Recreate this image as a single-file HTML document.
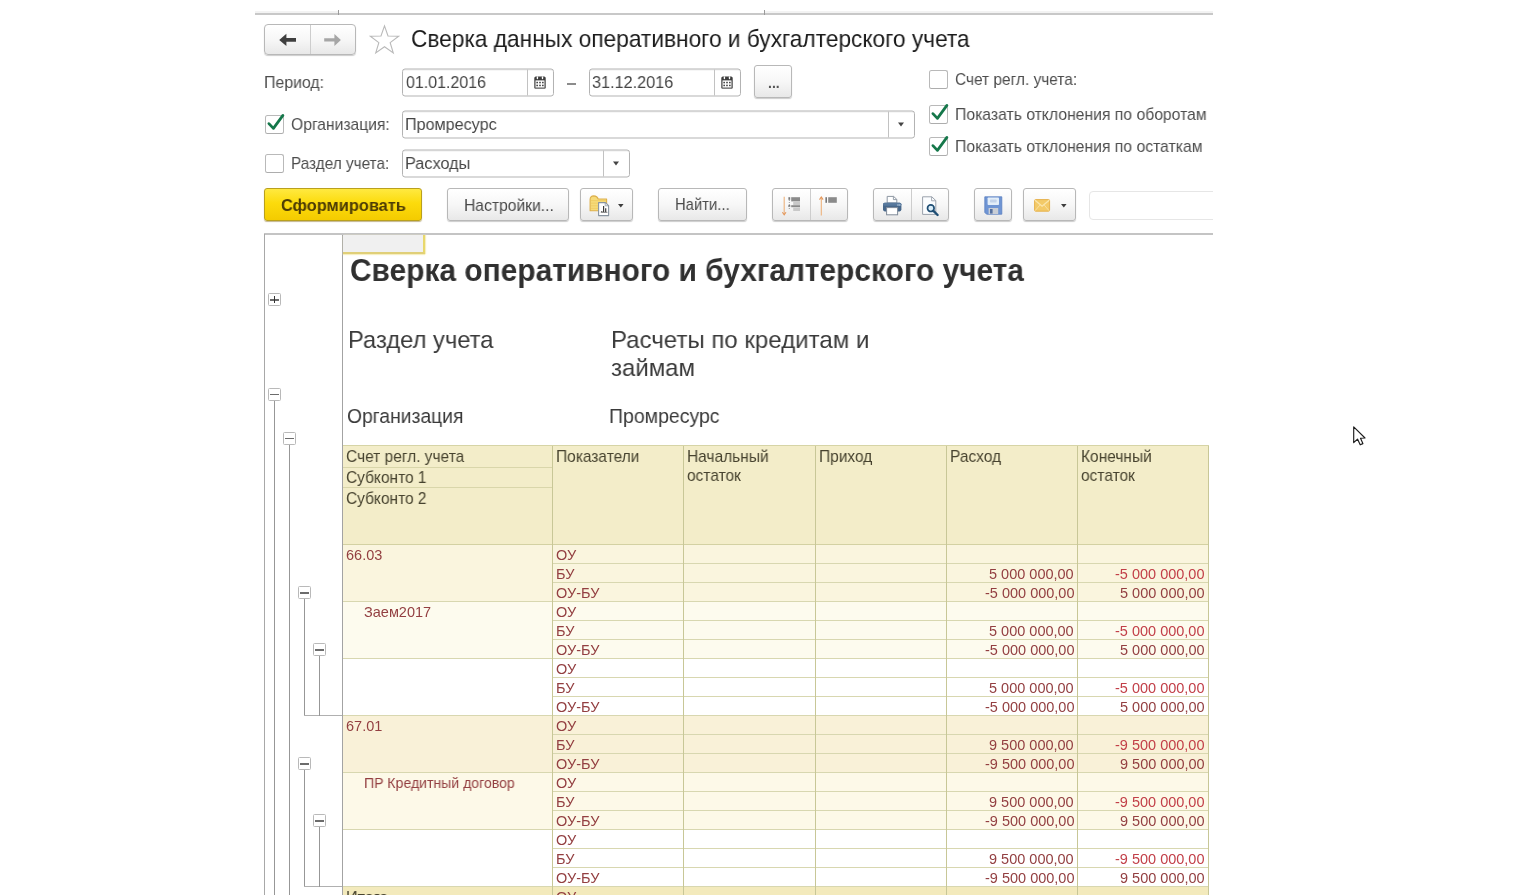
<!DOCTYPE html>
<html lang="ru">
<head>
<meta charset="utf-8">
<title>Сверка данных оперативного и бухгалтерского учета</title>
<style>
*{box-sizing:border-box;margin:0;padding:0}
html,body{width:1536px;height:895px;overflow:hidden;background:#fff}
body{font-family:"Liberation Sans",sans-serif;color:#444;position:relative;font-size:15px}
.abs{position:absolute}
.t{position:absolute;white-space:nowrap;line-height:1;will-change:transform}
.lbl{font-size:15.5px;color:#4d4d4d}
.inp{position:absolute;border:1px solid #b3b3b3;border-radius:3px;background:#fff;font-size:16px;color:#454545;box-shadow:inset 0 1px 1px rgba(0,0,0,.07)}
.inp .v{position:absolute;left:3.6px;top:4.2px;white-space:nowrap;line-height:1;font-size:17.1px;transform:scaleX(.935);transform-origin:0 50%}
.inp .dv{position:absolute;top:0;bottom:0;width:1px;background:#c2c2c2}
.btn{position:absolute;border:1px solid #b8b8b8;border-radius:3px;background:linear-gradient(#ffffff 0%,#f7f7f7 50%,#e8e8e8 100%);box-shadow:0 1px 1px rgba(0,0,0,.2);font-size:15.3px;color:#4d4d4d;text-align:center}
.btn .dv{position:absolute;top:0;bottom:0;width:1px;background:#cdcdcd}
.cb{position:absolute;width:19px;height:19px;border:1px solid #b9b9b9;border-bottom-color:#adadad;border-radius:2.5px;background:#fff}
.arr{position:absolute;width:0;height:0;border-left:3.5px solid transparent;border-right:3.5px solid transparent;border-top:4px solid #444}
.bx{position:absolute;width:13px;height:13px;border:1px solid #b9b9b9;background:#fff;border-radius:1.5px}
.bx:before{content:"";position:absolute;left:1px;right:1px;top:5px;height:1.5px;background:#6c6c6c}
.bx.plus:after{content:"";position:absolute;top:2px;bottom:2px;left:5px;width:1px;background:#333}
.vl{position:absolute;width:1px;background:#979797}
.hl{position:absolute;height:1px;background:#b0b0b0}
.bg{position:absolute}
.gv{position:absolute;width:1px;background:#c8c797}
.gh{position:absolute;height:1px;background:#d8d7b0}
.d{position:absolute;font-size:14px;color:#8e3a40;white-space:nowrap;line-height:1}
.r{color:#b0383f}
.h{position:absolute;font-size:15px;color:#454545;white-space:nowrap;line-height:1}
</style>
</head>
<body>
<div class="abs" style="left:255px;top:13px;width:958px;height:2px;background:#c8c8c8"></div>
<div class="abs" style="left:255px;top:11px;width:83px;height:2px;background:#f3f3f3"></div>
<div class="abs" style="left:765px;top:11px;width:448px;height:2px;background:#f3f3f3"></div>
<div class="abs" style="left:338px;top:10px;width:1px;height:5px;background:#9a9a9a"></div>
<div class="abs" style="left:764px;top:10px;width:1px;height:5px;background:#9a9a9a"></div>
<div class="btn" style="left:264px;top:24px;width:92px;height:31px;border-radius:4px">
  <div class="dv" style="left:45px"></div>
  <svg class="abs" style="left:0;top:0" width="90" height="29" viewBox="0 0 90 29"><path d="M14.2 14.9 L21.4 8.7 L21.4 13.1 L31 13.1 L31 16.7 L21.4 16.7 L21.4 21.1 Z" fill="#3f3f3f"/><path d="M75.9 14.9 L69.4 8.9 L69.4 13.2 L59.2 13.2 L59.2 16.6 L69.4 16.6 L69.4 20.9 Z" fill="#a6a6a6"/></svg>
</div>
<svg class="abs" style="left:368px;top:24.4px" width="33" height="33" viewBox="0 0 33 33"><path d="M16.50 1.90 L20.00 11.98 L30.67 12.20 L22.17 18.64 L25.26 28.85 L16.50 22.76 L7.74 28.85 L10.83 18.64 L2.33 12.20 L13.00 11.98 Z" fill="#fff" stroke="#b9b9b9" stroke-width="1.1" stroke-linejoin="miter"/></svg>
<div class="t" id="title" style="top:25.20px;font-size:24.2px;line-height:27px;left:411px;transform-origin:0 50%;transform:scaleX(0.938);color:#1a1a1a;">Сверка данных оперативного и бухгалтерского учета</div>
<div class="t" id="l1" style="top:73.20px;font-size:16.6px;line-height:19px;left:264px;transform-origin:0 50%;transform:scaleX(0.955);color:#4d4d4d;">Период:</div>
<div class="inp" style="left:402px;top:69px;width:152px;height:28px;transform:translateY(-0.5px)"><div class="dv" style="left:124px"></div><svg class="abs" style="left:131px;top:5.6px" width="12" height="14" viewBox="0 0 12 14"><path d="M0.3 2.6 Q0.3 1 1.9 1 H10.1 Q11.7 1 11.7 2.6 V12 Q11.7 13.3 10.4 13.3 H1.6 Q0.3 13.3 0.3 12 Z" fill="#3d3d3d"/><rect x="1.5" y="4.9" width="9" height="7.2" fill="#fff"/><ellipse cx="3.4" cy="2.3" rx=".75" ry="1.5" fill="#fff"/><ellipse cx="8.5" cy="2.3" rx=".75" ry="1.5" fill="#fff"/><path d="M1.2 12.3 H10.8 V13 H1.2 Z" fill="#9a9a9a"/><g fill="#333"><rect x="2.4" y="6.3" width="1.5" height="1.5"/><rect x="5.25" y="6.3" width="1.5" height="1.5"/><rect x="8.1" y="6.3" width="1.5" height="1.5"/><rect x="2.4" y="9.2" width="1.5" height="1.5"/><rect x="5.25" y="9.2" width="1.5" height="1.5"/><rect x="8.1" y="9.2" width="1.5" height="1.5"/></g></svg></div>
<div class="abs" style="left:567px;top:83px;width:9px;height:2px;background:#8c8c8c"></div>
<div class="inp" style="left:589px;top:69px;width:152px;height:28px;transform:translateY(-0.5px)"><div class="dv" style="left:124px"></div><svg class="abs" style="left:131px;top:5.6px" width="12" height="14" viewBox="0 0 12 14"><path d="M0.3 2.6 Q0.3 1 1.9 1 H10.1 Q11.7 1 11.7 2.6 V12 Q11.7 13.3 10.4 13.3 H1.6 Q0.3 13.3 0.3 12 Z" fill="#3d3d3d"/><rect x="1.5" y="4.9" width="9" height="7.2" fill="#fff"/><ellipse cx="3.4" cy="2.3" rx=".75" ry="1.5" fill="#fff"/><ellipse cx="8.5" cy="2.3" rx=".75" ry="1.5" fill="#fff"/><path d="M1.2 12.3 H10.8 V13 H1.2 Z" fill="#9a9a9a"/><g fill="#333"><rect x="2.4" y="6.3" width="1.5" height="1.5"/><rect x="5.25" y="6.3" width="1.5" height="1.5"/><rect x="8.1" y="6.3" width="1.5" height="1.5"/><rect x="2.4" y="9.2" width="1.5" height="1.5"/><rect x="5.25" y="9.2" width="1.5" height="1.5"/><rect x="8.1" y="9.2" width="1.5" height="1.5"/></g></svg></div>
<div class="btn" style="left:754px;top:65px;width:38px;height:33px"><span class="t" style="left:13px;top:9.5px;font-size:14px;font-weight:bold;color:#555">...</span></div>
<div class="cb" style="left:265px;top:115px"><svg class="abs" style="left:-1px;top:-4.2px;overflow:visible" width="22" height="24" viewBox="0 0 22 24"><path d="M3.9 11.6 L8.4 16.4 L17.9 3.4" fill="none" stroke="#15774a" stroke-width="2.75" stroke-linecap="round" stroke-linejoin="round"/></svg></div>
<div class="t" id="l2" style="top:115.30px;font-size:16.6px;line-height:19px;left:291.3px;transform-origin:0 50%;transform:scaleX(0.944);color:#4d4d4d;">Организация:</div>
<div class="inp" style="left:402px;top:111px;width:513px;height:28px;transform:translateY(-0.5px)"><div class="dv" style="left:485px"></div><div class="arr" style="left:495px;top:11px"></div></div>
<div class="cb" style="left:265px;top:154px"></div>
<div class="t" id="l3" style="top:154.00px;font-size:16.6px;line-height:19px;left:291.3px;transform-origin:0 50%;transform:scaleX(0.924);color:#4d4d4d;">Раздел учета:</div>
<div class="inp" style="left:402px;top:150px;width:228px;height:28px;transform:translateY(-0.5px)"><div class="dv" style="left:200px"></div><div class="arr" style="left:210px;top:11px"></div></div>
<div class="cb" style="left:929px;top:70px"></div>
<div class="t" id="l4" style="top:70.40px;font-size:16.6px;line-height:19px;left:955px;transform-origin:0 50%;transform:scaleX(0.93);color:#4d4d4d;">Счет регл. учета:</div>
<div class="cb" style="left:929px;top:105px"><svg class="abs" style="left:-1px;top:-4.2px;overflow:visible" width="22" height="24" viewBox="0 0 22 24"><path d="M3.9 11.6 L8.4 16.4 L17.9 3.4" fill="none" stroke="#15774a" stroke-width="2.75" stroke-linecap="round" stroke-linejoin="round"/></svg></div>
<div class="t" id="l5" style="top:105.20px;font-size:16.6px;line-height:19px;left:955px;transform-origin:0 50%;transform:scaleX(0.948);color:#4d4d4d;">Показать отклонения по оборотам</div>
<div class="cb" style="left:929px;top:137px"><svg class="abs" style="left:-1px;top:-4.2px;overflow:visible" width="22" height="24" viewBox="0 0 22 24"><path d="M3.9 11.6 L8.4 16.4 L17.9 3.4" fill="none" stroke="#15774a" stroke-width="2.75" stroke-linecap="round" stroke-linejoin="round"/></svg></div>
<div class="t" id="l6" style="top:137.20px;font-size:16.6px;line-height:19px;left:955px;transform-origin:0 50%;transform:scaleX(0.948);color:#4d4d4d;">Показать отклонения по остаткам</div>
<div class="t" id="d1" style="top:73.30px;font-size:17.1px;line-height:19px;left:405.6px;transform-origin:0 50%;transform:scaleX(0.935);color:#454545;">01.01.2016</div>
<div class="t" id="d2" style="top:73.30px;font-size:17.1px;line-height:19px;left:592.4px;transform-origin:0 50%;transform:scaleX(0.95);color:#454545;">31.12.2016</div>
<div class="t" id="v2" style="top:115.40px;font-size:17.1px;line-height:19px;left:405.2px;transform-origin:0 50%;transform:scaleX(0.945);color:#454545;">Промресурс</div>
<div class="t" id="v3" style="top:154.10px;font-size:17.1px;line-height:19px;left:405.2px;transform-origin:0 50%;transform:scaleX(0.952);color:#454545;">Расходы</div>
<div class="btn" style="left:264px;top:188px;width:158px;height:33px;border-color:#b9a01e;background:linear-gradient(#ffe940 0%,#fcdb0c 45%,#f4cb00 100%);box-shadow:0 1px 1px rgba(120,90,0,.45)"></div>
<div class="btn" style="left:447px;top:188px;width:122px;height:33px;"></div>
<div class="btn" style="left:580px;top:188px;width:53px;height:33px;"></div>
<div class="btn" style="left:658px;top:188px;width:89px;height:33px;"></div>
<div class="btn" style="left:772px;top:188px;width:76px;height:33px;"><div class="dv" style="left:37px"></div></div>
<div class="btn" style="left:873px;top:188px;width:76px;height:33px;"><div class="dv" style="left:37px"></div></div>
<div class="btn" style="left:974px;top:188px;width:38px;height:33px;"></div>
<div class="btn" style="left:1023px;top:188px;width:53px;height:33px;"></div>
<div class="t" id="go" style="top:194.60px;font-size:17.4px;line-height:20px;left:280.5px;transform-origin:0 50%;transform:scaleX(0.943);color:#4c3b06;font-weight:bold;">Сформировать</div>
<div class="t" id="b1" style="top:195.60px;font-size:16.4px;line-height:18px;left:463.6px;transform-origin:0 50%;transform:scaleX(0.955);color:#4a4a4a;">Настройки...</div>
<div class="t" id="b2" style="top:195.10px;font-size:16.4px;line-height:18px;left:674.8px;transform-origin:0 50%;transform:scaleX(0.905);color:#4a4a4a;">Найти...</div>
<svg class="abs" style="left:588.5px;top:194.5px;overflow:visible" width="22" height="22" viewBox="0 0 22 22"><path d="M1.1 15.8 V4.6 Q1.1 1.1 4.8 0.9 Q8.2 1 9.2 4 L17.6 4 L17.6 15.8 Z" fill="#f6db7a" stroke="#ddb04c" stroke-width="1.1" stroke-linejoin="round"/><path d="M1.8 5.6 H17 M1.8 8.2 H17 M1.8 10.8 H17 M1.8 13.4 H17" stroke="#eec65a" stroke-width=".9" opacity=".75"/><path d="M9.6 7.6 H16.4 L19.6 10.6 V20.6 H9.6 Z" fill="#fff" stroke="#8894a0" stroke-width="1.1" stroke-linejoin="round"/><path d="M16.2 7.8 V10.8 H19.4" fill="none" stroke="#8894a0" stroke-width=".8"/><path d="M14.6 17 V11 M16.7 17 V13.2" stroke="#3c3c3c" stroke-width="1.2" fill="none"/><path d="M11.8 17.3 H18.4" stroke="#555" stroke-width=".8"/><rect x="12.3" y="16" width="1" height="1" fill="#444"/></svg>
<svg class="abs" style="left:618.2px;top:204.20000000000002px;overflow:visible" width="5.6" height="3.4" viewBox="0 0 5.6 3.4"><path d="M0 0 L5.6 0 L2.8 3.4 Z" fill="#3d3d3d"/></svg>
<svg class="abs" style="left:778px;top:195px;overflow:visible" width="26" height="22" viewBox="0 0 26 22"><path d="M6.2 1.8 V19" stroke="#ecb27c" stroke-width="1.1"/><path d="M4.4 17.2 L6.2 19.8 L8 17.2" fill="none" stroke="#e3965a" stroke-width="1.1"/><rect x="10.4" y="2.2" width="1.8" height="2.6" fill="#777"/><rect x="10.4" y="10" width="1.8" height="2" fill="#777"/><path d="M11.3 5 V15" stroke="#9a9a9a" stroke-width="1" stroke-dasharray="1 1"/><rect x="13.2" y="2.2" width="8.8" height="4.2" fill="#8a8a8a"/><rect x="15.2" y="6.8" width="6.8" height="3.2" fill="#c9c9c9"/><rect x="13.2" y="10.2" width="8.8" height="2" fill="#8a8a8a"/><rect x="15.2" y="12.6" width="6.8" height="3.4" fill="#c9c9c9"/></svg>
<svg class="abs" style="left:815px;top:195px;overflow:visible" width="26" height="22" viewBox="0 0 26 22"><path d="M6.3 2.4 V20.6" stroke="#ecb27c" stroke-width="1.1"/><path d="M4.5 4.6 L6.3 2 L8.1 4.6" fill="none" stroke="#e3965a" stroke-width="1.1"/><rect x="10.4" y="2.2" width="1.6" height="5.6" fill="#777"/><rect x="13.2" y="2.2" width="8.6" height="5.6" fill="#8a8a8a"/></svg>
<svg class="abs" style="left:882px;top:195px;overflow:visible" width="21" height="21" viewBox="0 0 21 21"><path d="M5.2 8 V1.4 H11.6 L14.8 4.4 V8 Z" fill="#fff" stroke="#8c96a2" stroke-width="1"/><path d="M11.4 1.4 V4.6 H14.8" fill="none" stroke="#8c96a2" stroke-width=".9"/><rect x="1" y="7.8" width="18.4" height="8.6" rx="1.8" fill="#47678a"/><rect x="1" y="7.8" width="18.4" height="3" rx="1.5" fill="#58799d"/><rect x="15.4" y="9.4" width="1.2" height="1.2" fill="#cfe0f0"/><rect x="17.2" y="9.4" width="1.2" height="1.2" fill="#cfe0f0"/><rect x="4.6" y="12.6" width="11" height="7.2" fill="#fff" stroke="#7f8b99" stroke-width="1"/></svg>
<svg class="abs" style="left:921px;top:195px;overflow:visible" width="20" height="22" viewBox="0 0 20 22"><path d="M1.6 1.8 H10.8 L14.8 5.6 V19.4 H1.6 Z" fill="#fbfdff" stroke="#9aa2ac" stroke-width="1"/><path d="M10.6 1.8 V5.8 H14.8" fill="none" stroke="#9aa2ac" stroke-width=".9"/><circle cx="9.8" cy="13.2" r="3.3" fill="#d9edf9" stroke="#1f4e74" stroke-width="1.7"/><path d="M12.4 15.8 L16.6 20" stroke="#1f4e74" stroke-width="2.4" stroke-linecap="round"/></svg>
<svg class="abs" style="left:983.5px;top:196px;overflow:visible" width="19" height="19" viewBox="0 0 19 19"><path d="M0.8 0.8 H17.8 V18.2 H2.6 L0.8 16.4 Z" fill="#6f95d4" stroke="#5a7fc0" stroke-width=".8"/><rect x="3.6" y="1.4" width="11.4" height="7.6" rx=".8" fill="#e3eef9"/><rect x="6" y="3.4" width="6.6" height="3.2" rx=".8" fill="#c3d3ea"/><rect x="4.6" y="12" width="9.6" height="6" fill="#c9ced6"/><rect x="6" y="13" width="2.6" height="4.6" fill="#55709f"/></svg>
<svg class="abs" style="left:1033.6px;top:199.2px;overflow:visible" width="16.2" height="12.8" viewBox="0 0 16.2 12.8"><rect x=".6" y=".6" width="15" height="11.6" rx="1" fill="#f3ca68" stroke="#e6b24e" stroke-width="1"/><path d="M1 1.2 L8.1 7.2 L15.2 1.2" fill="none" stroke="#fae6ae" stroke-width="1.3"/><path d="M1.2 11.6 L6 6 M15 11.6 L10.2 6" fill="none" stroke="#f9dfa0" stroke-width="1"/></svg>
<svg class="abs" style="left:1061.2px;top:204.0px;overflow:visible" width="5.6" height="3.4" viewBox="0 0 5.6 3.4"><path d="M0 0 L5.6 0 L2.8 3.4 Z" fill="#3d3d3d"/></svg>
<div class="inp" style="left:1089px;top:191px;width:130px;height:29px;border-color:#e6e6e6;box-shadow:none;border-radius:4px"></div>
<div class="abs" style="left:1213px;top:185px;width:20px;height:40px;background:#fff"></div>
<div class="abs" style="left:264px;top:233px;width:949px;height:2px;background:#c4c4c4"></div>
<div class="abs" style="left:264px;top:234px;width:1px;height:661px;background:#a8a8a8"></div>
<div class="abs" style="left:342px;top:235px;width:1px;height:660px;background:#a3a3a3"></div>
<div class="abs" style="left:343px;top:235px;width:82px;height:19px;background:#f0f0f0;border-right:2px solid #e8d86c;border-bottom:2px solid #e0cf78;box-shadow:0 1px 1px #f7efc0,1px 0 1px #f7efc0"></div>
<div class="t" id="rt" style="top:253.40px;font-size:30.6px;line-height:34px;left:350px;transform-origin:0 50%;transform:scaleX(0.977);color:#303030;font-weight:bold;">Сверка оперативного и бухгалтерского учета</div>
<div class="t" id="s1" style="top:326.40px;font-size:24.6px;line-height:27px;left:348.4px;transform-origin:0 50%;transform:scaleX(0.965);color:#3a3a3a;">Раздел учета</div>
<div class="t" id="s2" style="top:326.40px;font-size:24.6px;line-height:27px;left:611.2px;transform-origin:0 50%;transform:scaleX(0.977);color:#3a3a3a;">Расчеты по кредитам и</div>
<div class="t" style="top:354.00px;font-size:24.6px;line-height:27px;left:610.6px;transform-origin:0 50%;transform:scaleX(0.975);color:#3a3a3a;">займам</div>
<div class="t" id="o1" style="top:403.80px;font-size:20.5px;line-height:23px;left:347.4px;transform-origin:0 50%;transform:scaleX(0.942);color:#3a3a3a;">Организация</div>
<div class="t" id="o2" style="top:403.80px;font-size:20.5px;line-height:23px;left:609.4px;transform-origin:0 50%;transform:scaleX(0.95);color:#3a3a3a;">Промресурс</div>
<div class="bx plus" style="left:268px;top:293px"></div>
<div class="vl" style="left:274px;top:400px;height:495px"></div>
<div class="bx" style="left:268px;top:387.5px"></div>
<div class="vl" style="left:289px;top:444px;height:451px"></div>
<div class="bx" style="left:283px;top:431.5px"></div>
<div class="vl" style="left:304px;top:599px;height:117px"></div>
<div class="hl" style="left:304px;top:715px;width:38px"></div>
<div class="bx" style="left:298px;top:586px"></div>
<div class="vl" style="left:319px;top:656px;height:60px"></div>
<div class="bx" style="left:313px;top:643px"></div>
<div class="vl" style="left:304px;top:770px;height:117px"></div>
<div class="hl" style="left:304px;top:886px;width:38px"></div>
<div class="bx" style="left:298px;top:757px"></div>
<div class="vl" style="left:319px;top:827px;height:60px"></div>
<div class="bx" style="left:313px;top:814px"></div>
<div class="bg" style="left:343px;top:446px;width:866px;height:99px;background:#f3edc9"></div>
<div class="bg" style="left:343px;top:545px;width:866px;height:57px;background:#faf5de"></div>
<div class="t" style="top:546.50px;font-size:14.5px;line-height:16px;left:345.6px;transform-origin:0 50%;color:#933f41;">66.03</div>
<div class="t" style="top:546.50px;font-size:14.5px;line-height:16px;left:555.8px;transform-origin:0 50%;color:#933f41;">ОУ</div>
<div class="gh" style="left:552px;top:563px;width:657px"></div>
<div class="t" style="top:565.50px;font-size:14.5px;line-height:16px;left:555.8px;transform-origin:0 50%;color:#933f41;">БУ</div>
<div class="t" style="top:565.50px;font-size:14.5px;line-height:16px;right:462px;transform-origin:100% 50%;color:#933f41;">5 000 000,00</div>
<div class="t" style="top:565.50px;font-size:14.5px;line-height:16px;right:331.4000000000001px;transform-origin:100% 50%;color:#c23f48;">-5 000 000,00</div>
<div class="gh" style="left:552px;top:582px;width:657px"></div>
<div class="t" style="top:584.50px;font-size:14.5px;line-height:16px;left:555.8px;transform-origin:0 50%;color:#933f41;">ОУ-БУ</div>
<div class="t" style="top:584.50px;font-size:14.5px;line-height:16px;right:462px;transform-origin:100% 50%;color:#933f41;">-5 000 000,00</div>
<div class="t" style="top:584.50px;font-size:14.5px;line-height:16px;right:331.4000000000001px;transform-origin:100% 50%;color:#933f41;">5 000 000,00</div>
<div class="gh" style="left:343px;top:601px;width:866px"></div>
<div class="bg" style="left:343px;top:602px;width:866px;height:57px;background:#fdfbee"></div>
<div class="t" style="top:603.50px;font-size:14.5px;line-height:16px;left:363.6px;transform-origin:0 50%;color:#933f41;">Заем2017</div>
<div class="t" style="top:603.50px;font-size:14.5px;line-height:16px;left:555.8px;transform-origin:0 50%;color:#933f41;">ОУ</div>
<div class="gh" style="left:552px;top:620px;width:657px"></div>
<div class="t" style="top:622.50px;font-size:14.5px;line-height:16px;left:555.8px;transform-origin:0 50%;color:#933f41;">БУ</div>
<div class="t" style="top:622.50px;font-size:14.5px;line-height:16px;right:462px;transform-origin:100% 50%;color:#933f41;">5 000 000,00</div>
<div class="t" style="top:622.50px;font-size:14.5px;line-height:16px;right:331.4000000000001px;transform-origin:100% 50%;color:#c23f48;">-5 000 000,00</div>
<div class="gh" style="left:552px;top:639px;width:657px"></div>
<div class="t" style="top:641.50px;font-size:14.5px;line-height:16px;left:555.8px;transform-origin:0 50%;color:#933f41;">ОУ-БУ</div>
<div class="t" style="top:641.50px;font-size:14.5px;line-height:16px;right:462px;transform-origin:100% 50%;color:#933f41;">-5 000 000,00</div>
<div class="t" style="top:641.50px;font-size:14.5px;line-height:16px;right:331.4000000000001px;transform-origin:100% 50%;color:#933f41;">5 000 000,00</div>
<div class="gh" style="left:343px;top:658px;width:866px"></div>
<div class="bg" style="left:343px;top:659px;width:866px;height:57px;background:#ffffff"></div>
<div class="t" style="top:660.50px;font-size:14.5px;line-height:16px;left:555.8px;transform-origin:0 50%;color:#933f41;">ОУ</div>
<div class="gh" style="left:552px;top:677px;width:657px"></div>
<div class="t" style="top:679.50px;font-size:14.5px;line-height:16px;left:555.8px;transform-origin:0 50%;color:#933f41;">БУ</div>
<div class="t" style="top:679.50px;font-size:14.5px;line-height:16px;right:462px;transform-origin:100% 50%;color:#933f41;">5 000 000,00</div>
<div class="t" style="top:679.50px;font-size:14.5px;line-height:16px;right:331.4000000000001px;transform-origin:100% 50%;color:#c23f48;">-5 000 000,00</div>
<div class="gh" style="left:552px;top:696px;width:657px"></div>
<div class="t" style="top:698.50px;font-size:14.5px;line-height:16px;left:555.8px;transform-origin:0 50%;color:#933f41;">ОУ-БУ</div>
<div class="t" style="top:698.50px;font-size:14.5px;line-height:16px;right:462px;transform-origin:100% 50%;color:#933f41;">-5 000 000,00</div>
<div class="t" style="top:698.50px;font-size:14.5px;line-height:16px;right:331.4000000000001px;transform-origin:100% 50%;color:#933f41;">5 000 000,00</div>
<div class="gh" style="left:343px;top:715px;width:866px"></div>
<div class="bg" style="left:343px;top:716px;width:866px;height:57px;background:#f9f1d8"></div>
<div class="t" style="top:717.50px;font-size:14.5px;line-height:16px;left:345.6px;transform-origin:0 50%;color:#933f41;">67.01</div>
<div class="t" style="top:717.50px;font-size:14.5px;line-height:16px;left:555.8px;transform-origin:0 50%;color:#933f41;">ОУ</div>
<div class="gh" style="left:552px;top:734px;width:657px"></div>
<div class="t" style="top:736.50px;font-size:14.5px;line-height:16px;left:555.8px;transform-origin:0 50%;color:#933f41;">БУ</div>
<div class="t" style="top:736.50px;font-size:14.5px;line-height:16px;right:462px;transform-origin:100% 50%;color:#933f41;">9 500 000,00</div>
<div class="t" style="top:736.50px;font-size:14.5px;line-height:16px;right:331.4000000000001px;transform-origin:100% 50%;color:#c23f48;">-9 500 000,00</div>
<div class="gh" style="left:552px;top:753px;width:657px"></div>
<div class="t" style="top:755.50px;font-size:14.5px;line-height:16px;left:555.8px;transform-origin:0 50%;color:#933f41;">ОУ-БУ</div>
<div class="t" style="top:755.50px;font-size:14.5px;line-height:16px;right:462px;transform-origin:100% 50%;color:#933f41;">-9 500 000,00</div>
<div class="t" style="top:755.50px;font-size:14.5px;line-height:16px;right:331.4000000000001px;transform-origin:100% 50%;color:#933f41;">9 500 000,00</div>
<div class="gh" style="left:343px;top:772px;width:866px"></div>
<div class="bg" style="left:343px;top:773px;width:866px;height:57px;background:#fdf9e8"></div>
<div class="t" style="top:774.50px;font-size:14.5px;line-height:16px;left:363.6px;transform-origin:0 50%;transform:scaleX(0.97);color:#933f41;">ПР Кредитный договор</div>
<div class="t" style="top:774.50px;font-size:14.5px;line-height:16px;left:555.8px;transform-origin:0 50%;color:#933f41;">ОУ</div>
<div class="gh" style="left:552px;top:791px;width:657px"></div>
<div class="t" style="top:793.50px;font-size:14.5px;line-height:16px;left:555.8px;transform-origin:0 50%;color:#933f41;">БУ</div>
<div class="t" style="top:793.50px;font-size:14.5px;line-height:16px;right:462px;transform-origin:100% 50%;color:#933f41;">9 500 000,00</div>
<div class="t" style="top:793.50px;font-size:14.5px;line-height:16px;right:331.4000000000001px;transform-origin:100% 50%;color:#c23f48;">-9 500 000,00</div>
<div class="gh" style="left:552px;top:810px;width:657px"></div>
<div class="t" style="top:812.50px;font-size:14.5px;line-height:16px;left:555.8px;transform-origin:0 50%;color:#933f41;">ОУ-БУ</div>
<div class="t" style="top:812.50px;font-size:14.5px;line-height:16px;right:462px;transform-origin:100% 50%;color:#933f41;">-9 500 000,00</div>
<div class="t" style="top:812.50px;font-size:14.5px;line-height:16px;right:331.4000000000001px;transform-origin:100% 50%;color:#933f41;">9 500 000,00</div>
<div class="gh" style="left:343px;top:829px;width:866px"></div>
<div class="bg" style="left:343px;top:830px;width:866px;height:57px;background:#ffffff"></div>
<div class="t" style="top:831.50px;font-size:14.5px;line-height:16px;left:555.8px;transform-origin:0 50%;color:#933f41;">ОУ</div>
<div class="gh" style="left:552px;top:848px;width:657px"></div>
<div class="t" style="top:850.50px;font-size:14.5px;line-height:16px;left:555.8px;transform-origin:0 50%;color:#933f41;">БУ</div>
<div class="t" style="top:850.50px;font-size:14.5px;line-height:16px;right:462px;transform-origin:100% 50%;color:#933f41;">9 500 000,00</div>
<div class="t" style="top:850.50px;font-size:14.5px;line-height:16px;right:331.4000000000001px;transform-origin:100% 50%;color:#c23f48;">-9 500 000,00</div>
<div class="gh" style="left:552px;top:867px;width:657px"></div>
<div class="t" style="top:869.50px;font-size:14.5px;line-height:16px;left:555.8px;transform-origin:0 50%;color:#933f41;">ОУ-БУ</div>
<div class="t" style="top:869.50px;font-size:14.5px;line-height:16px;right:462px;transform-origin:100% 50%;color:#933f41;">-9 500 000,00</div>
<div class="t" style="top:869.50px;font-size:14.5px;line-height:16px;right:331.4000000000001px;transform-origin:100% 50%;color:#933f41;">9 500 000,00</div>
<div class="gh" style="left:343px;top:886px;width:866px"></div>
<div class="bg" style="left:343px;top:887px;width:866px;height:8px;background:#f3eabc"></div>
<div class="t" style="top:888.40px;font-size:16.4px;line-height:18px;left:345.6px;transform-origin:0 50%;transform:scaleX(0.9828);color:#47432f;">Итого</div>
<div class="t" style="top:888.50px;font-size:14.5px;line-height:16px;left:555.8px;transform-origin:0 50%;color:#933f41;">ОУ</div>
<div class="gh" style="left:343px;top:445px;width:866px;background:#d6d4a6"></div>
<div class="gh" style="left:343px;top:467px;width:209px;background:#d9d6aa"></div>
<div class="gh" style="left:343px;top:487px;width:209px;background:#d9d6aa"></div>
<div class="gh" style="left:343px;top:544px;width:866px;background:#d3d1a2"></div>
<div class="gv" style="left:552px;top:446px;height:449px"></div>
<div class="gv" style="left:683px;top:446px;height:449px"></div>
<div class="gv" style="left:815px;top:446px;height:449px"></div>
<div class="gv" style="left:946px;top:446px;height:449px"></div>
<div class="gv" style="left:1077px;top:446px;height:449px"></div>
<div class="gv" style="left:1208px;top:446px;height:449px"></div>
<div class="t" style="top:447.00px;font-size:16.4px;line-height:18px;left:345.8px;transform-origin:0 50%;transform:scaleX(0.945);color:#47432f;">Счет регл. учета</div>
<div class="t" style="top:468.00px;font-size:16.4px;line-height:18px;left:345.8px;transform-origin:0 50%;transform:scaleX(0.945);color:#47432f;">Субконто 1</div>
<div class="t" style="top:489.00px;font-size:16.4px;line-height:18px;left:345.8px;transform-origin:0 50%;transform:scaleX(0.945);color:#47432f;">Субконто 2</div>
<div class="t" style="top:447.00px;font-size:16.4px;line-height:18px;left:555.8px;transform-origin:0 50%;transform:scaleX(0.945);color:#47432f;">Показатели</div>
<div class="t" style="top:447.00px;font-size:16.4px;line-height:18px;left:686.8px;transform-origin:0 50%;transform:scaleX(0.945);color:#47432f;">Начальный</div>
<div class="t" style="top:466.00px;font-size:16.4px;line-height:18px;left:686.8px;transform-origin:0 50%;transform:scaleX(0.945);color:#47432f;">остаток</div>
<div class="t" style="top:447.00px;font-size:16.4px;line-height:18px;left:818.8px;transform-origin:0 50%;transform:scaleX(0.945);color:#47432f;">Приход</div>
<div class="t" style="top:447.00px;font-size:16.4px;line-height:18px;left:949.8px;transform-origin:0 50%;transform:scaleX(0.945);color:#47432f;">Расход</div>
<div class="t" style="top:447.00px;font-size:16.4px;line-height:18px;left:1080.8px;transform-origin:0 50%;transform:scaleX(0.945);color:#47432f;">Конечный</div>
<div class="t" style="top:466.00px;font-size:16.4px;line-height:18px;left:1080.8px;transform-origin:0 50%;transform:scaleX(0.945);color:#47432f;">остаток</div>
<svg class="abs" style="left:1352px;top:426px" width="15" height="21" viewBox="0 0 15 21"><path d="M1.7 0.9 L1.7 16.7 L5.5 13.1 L8.2 18.8 L10.9 17.6 L8.5 12.2 L13 12 Z" fill="#fff" stroke="#1c1c1c" stroke-width="1.15" stroke-linejoin="round"/></svg>
</body>
</html>
